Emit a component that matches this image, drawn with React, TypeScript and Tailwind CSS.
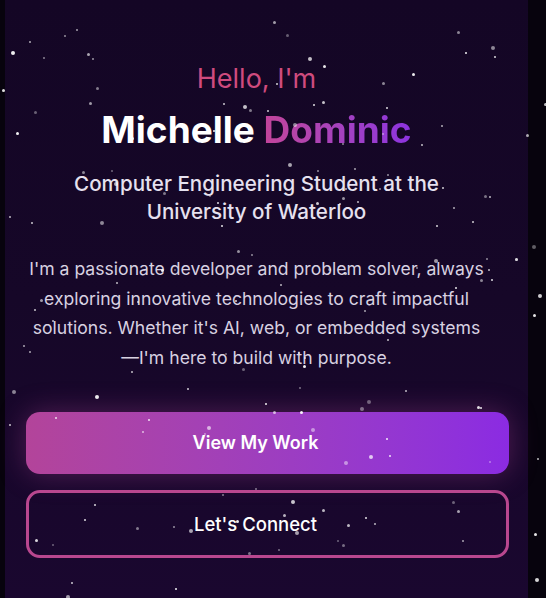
import { useMemo } from "react";

// tiny seeded rng so the starfield is the same every render
function rng(seed: number) {
  let a = seed;
  return () => {
    a |= 0;
    a = (a + 0x6d2b79f5) | 0;
    let t = Math.imul(a ^ (a >>> 15), 1 | a);
    t = (t + Math.imul(t ^ (t >>> 7), 61 | t)) ^ t;
    return ((t ^ (t >>> 14)) >>> 0) / 4294967296;
  };
}

function Stars() {
  const stars = useMemo(() => {
    const r = rng(42);
    return Array.from({ length: 160 }, () => ({
      x: r() * 546,
      y: r() * 598,
      s: r() < 0.55 ? 2 : r() < 0.7 ? 3 : 4,
      o: 0.35 + r() * 0.6,
    }));
  }, []);

  return (
    <div className="pointer-events-none absolute inset-0">
      {stars.map((st, i) => (
        <div
          key={i}
          className="absolute rounded-full bg-white"
          style={{ left: st.x, top: st.y, width: st.s, height: st.s, opacity: st.o }}
        />
      ))}
    </div>
  );
}

export default function App() {
  return (
    <div
      className="relative h-[598px] w-full overflow-hidden bg-[#07030d]"
      style={{ fontFamily: "Inter, 'Noto Sans', sans-serif" }}
    >
      <div className="ml-[5px] h-full w-[523px] bg-gradient-to-b from-[#140625] via-[#160728] to-[#1a072f]">
        <div className="flex flex-col pl-[21px] pr-[19px] pt-[61px]">
          {/* Intro text */}
          <div className="flex flex-col items-center pr-[22px] text-center">
            <p className="text-[27px] leading-[36px] text-[#cf4b7e]">Hello, I'm</p>
            <h1 className="mt-[9px] text-[37px] font-bold leading-[48px] text-white">
              Michelle{" "}
              <span className="bg-gradient-to-r from-[#c2449a] to-[#8c32e0] bg-clip-text text-transparent">
                Dominic
              </span>
            </h1>
            <h2 className="mt-[16px] max-w-md text-[20.6px] font-medium leading-7 text-[#e6e1ef]">
              Computer Engineering Student at the University of Waterloo
            </h2>
            <p className="mt-[28px] text-[17.6px] leading-[29.5px] text-[#d8d1e1]">
              I'm a passionate developer and problem solver, always exploring innovative technologies to craft
              impactful solutions. Whether it's AI, web, or embedded systems —I'm here to build with purpose.
            </p>
          </div>

          {/* Buttons */}
          <div className="mt-[40px] flex flex-col gap-4">
            <button className="rounded-[14px] bg-gradient-to-r from-[#b3449a] to-[#8b2be2] py-[17px] pr-[24px] text-lg font-semibold leading-7 text-white shadow-[0_0_28px_rgba(190,70,160,0.35)]">
              View My Work
            </button>
            <button className="rounded-[14px] border-[3px] border-[#b9478f] py-[17px] pr-[24px] text-[18.5px] font-medium leading-7 text-white">
              Let's Connect
            </button>
          </div>
        </div>
      </div>
      <Stars />
    </div>
  );
}
